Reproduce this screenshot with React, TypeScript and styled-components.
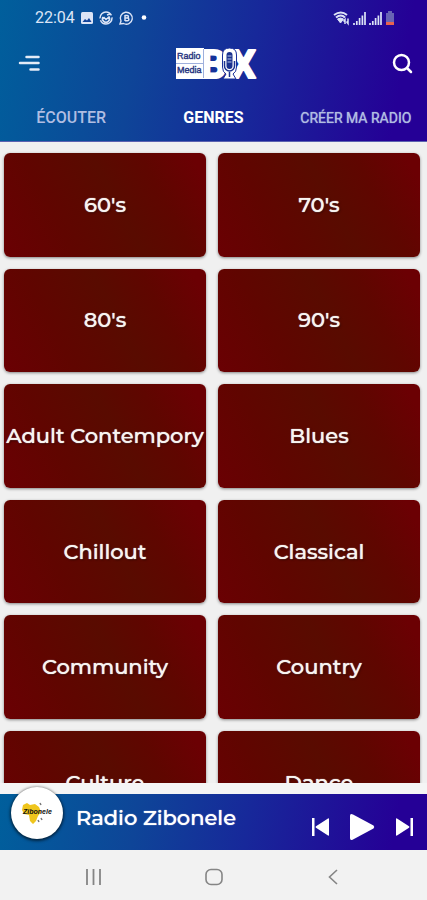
import React, { useState } from "react";
import styled, { createGlobalStyle } from "styled-components";

const GlobalStyle = createGlobalStyle`
  * { box-sizing: border-box; }
  body { margin: 0; background: #f0f0f0; font-family: Roboto, sans-serif; }
  button { border: 0; padding: 0; margin: 0; background: none; color: inherit; font: inherit; cursor: pointer; }
  svg { display: block; overflow: visible; }
`;

const brandGradient = "linear-gradient(100deg, #005f9c 0%, #0e4598 32%, #17289a 58%, #250096 92%)";

const Screen = styled.div`
  display: flex;
  flex-direction: column;
  height: 100vh;
  overflow: hidden;
`;

const Header = styled.header`
  flex: none;
  background: ${brandGradient};
  color: #fff;
  border-bottom: 1px solid #5c62b0;
`;

const StatusBar = styled.div`
  display: flex;
  align-items: center;
  justify-content: space-between;
  height: 36px;
  padding: 0 32px 0 35px;
  color: #dce4f6;
`;

const StatusGroup = styled.div<{ $gap: number }>`
  display: flex;
  align-items: center;
  gap: ${(p) => p.$gap}px;
`;

const Clock = styled.time`
  font-size: 16px;
  line-height: 20px;
`;

const Toolbar = styled.div`
  display: grid;
  grid-template-columns: 1fr auto 1fr;
  align-items: center;
  height: 56px;
  padding: 0 12px 0 16px;
`;

const IconButton = styled.button<{ $end?: boolean }>`
  display: flex;
  justify-self: ${(p) => (p.$end ? "end" : "start")};
`;

const Tabs = styled.nav`
  display: grid;
  grid-template-columns: repeat(3, 1fr);
  height: 49px;
`;

const Tab = styled.button<{ $active: boolean; $small?: boolean }>`
  color: ${(p) => (p.$active ? "#fff" : "#b0bde2")};
  font-size: ${(p) => (p.$small ? 14 : 16)}px;
  font-weight: ${(p) => (p.$active ? 700 : p.$small ? 400 : 500)};
  text-shadow: ${(p) => (p.$small ? "0 0 1px #b0bde2" : "none")};
  white-space: nowrap;
  padding-top: 2px;
`;

const Genres = styled.main`
  flex: 1;
  min-height: 0;
  overflow: hidden;
  display: grid;
  grid-template-columns: 1fr 1fr;
  align-content: start;
  gap: 12px;
  padding: 11px 7px 0 4px;
`;

const GenreCard = styled.button`
  aspect-ratio: 39 / 20;
  min-width: 0;
  border-radius: 6px;
  background: linear-gradient(62deg, #6a0003 0%, #600500 28%, #590b00 55%, #5f0600 74%, #6b0003 94%);
  box-shadow: 0 1px 3px rgba(0, 0, 0, 0.45);
  color: #f8f4f1;
  font-family: Montserrat, Inter, sans-serif;
  font-size: 21px;
  font-weight: 500;
  line-height: 28px;
  white-space: nowrap;
  text-shadow: 0 0 1px #f8f4f1, 1px 1px 2px rgba(0, 0, 0, 0.5);
`;

const PlayerArea = styled.footer`
  flex: none;
  padding-top: 11px;
  background: #f5f5f5;
`;

const Player = styled.div`
  display: flex;
  align-items: center;
  height: 56px;
  padding: 0 14px 0 11px;
  background: ${brandGradient};
  color: #fff;
`;

const Avatar = styled.div`
  flex: none;
  align-self: flex-start;
  width: 52px;
  height: 52px;
  margin-top: -7px;
  border-radius: 50%;
  background: #fff;
  box-shadow: 0 1px 3px 1px rgba(0, 0, 0, 0.6);
`;

const Station = styled.div`
  flex: 1;
  min-width: 0;
  padding: 0 0 9px 13px;
  font-family: Montserrat, Inter, sans-serif;
  font-size: 21px;
  font-weight: 500;
  line-height: 28px;
  white-space: nowrap;
  text-shadow: 0 0 1px #fff;
`;

const Controls = styled.div`
  display: flex;
  align-items: center;
  gap: 20px;
  padding-top: 9px;
`;

const SystemNav = styled.nav`
  flex: none;
  display: flex;
  align-items: center;
  justify-content: center;
  gap: 24vw;
  height: 50px;
  padding-top: 3px;
  background: #f2f2f2;
  color: #858585;
`;

const Logo = () => (
  <svg width="82" height="34" viewBox="0 0 82 34" role="img" aria-label="Radio Media Box">
    <g fontFamily="Roboto, sans-serif" fontWeight="700" fontSize="39" fill="#fff" stroke="#fff" strokeWidth="2" strokeLinejoin="round">
      <text x="26" y="31">B</text>
      <text x="56" y="31">X</text>
    </g>
    <rect x="1" y="1" width="28" height="31" fill="#fff" />
    <path d="M1 16.500H28M28.500 2V31" stroke="#9fb0dc" strokeWidth="1" />
    <g fontFamily="Liberation Sans, sans-serif" fontSize="9" fill="#27357f" stroke="#27357f" strokeWidth=".4">
      <text x="2" y="12">Radio</text>
      <text x="2" y="26">Media</text>
    </g>
    <path d="M47.500 8q0-7 7-7t7 7v12q0 5-3.500 7l3 5H48l3-5q-3.500-2-3.500-7z" fill="#fff" stroke="#19309a" strokeWidth="1" />
    <path d="M49.500 14v5a5 5 0 0 0 10 0v-5M54.500 25v5" fill="none" stroke="#1b328f" strokeWidth="1.500" />
    <rect x="51.500" y="5" width="6" height="17" rx="3" fill="#1b328f" />
    <path d="M52.500 9h4M52.500 12h4M52.500 15h4" stroke="#b9c5e8" strokeWidth="1" />
  </svg>
);

const Signal = () => (
  <svg width="13" height="13" viewBox="0 0 13 13" stroke="currentColor" strokeWidth="1.700">
    <path d="M1 13v-2M3.800 13V9M6.600 13V6M9.400 13V3.500M12 13V0" />
  </svg>
);

const ZiboneleLogo = () => (
  <svg width="52" height="52" viewBox="0 0 52 52" role="img" aria-label="Zibonele">
    <path d="M12 18l4-2 3 2 5-1 4 3 2 5-3 4-2 5-3 3-3-3-1-6-5-1-2-4z" fill="#efc51d" />
    <path d="M29 16l1 2M30 31l1 2M27 33l1 2" stroke="#777" strokeWidth="1.500" />
    <text x="12" y="27" fontFamily="Liberation Sans, sans-serif" fontSize="7" fontWeight="700" fontStyle="italic" fill="#111">Zibonele</text>
  </svg>
);

const genres = [
  "60's", "70's", "80's", "90's", "Adult Contempory", "Blues",
  "Chillout", "Classical", "Community", "Country", "Culture", "Dance",
];
const tabs = ["ÉCOUTER", "GENRES", "CRÉER MA RADIO"];

export default function App() {
  const [active, setActive] = useState("GENRES");
  return (
    <Screen>
      <GlobalStyle />
      <Header>
        <StatusBar>
          <StatusGroup $gap={6}>
            <Clock>22:04</Clock>
            <svg width="12" height="12" viewBox="0 0 12 12">
              <rect width="12" height="12" rx="1.500" fill="currentColor" />
              <path d="M1.500 10l2.500-3 2 1.500L8 6l2.500 4z" fill="#13449a" />
            </svg>
            <svg width="14" height="14" viewBox="0 0 14 14" fill="none" stroke="currentColor">
              <circle cx="7" cy="7" r="6" strokeWidth="1.500" strokeDasharray="16 2" />
              <path d="M4 6a3.500 3.500 0 1 0 6 0L7 8.500 4.500 6M8 4l3-1" strokeWidth="1.600" />
            </svg>
            <svg width="15" height="14" viewBox="0 0 15 14" fill="none" stroke="currentColor">
              <path d="M1 13l1-3a6 6 0 1 1 2.500 2.500z" strokeWidth="1.400" />
              <path d="M6 4v6M6 4.500h2.200a1.200 1.200 0 0 1 0 2.500H6h2.500a1.400 1.400 0 0 1 0 2.800H6" strokeWidth="1.500" />
            </svg>
            <svg width="8" height="6" viewBox="0 0 8 6"><circle cx="4" cy="2.500" r="2.300" fill="#fff" /></svg>
          </StatusGroup>
          <StatusGroup $gap={3}>
            <svg width="17" height="14" viewBox="0 0 17 14" fill="none" stroke="currentColor">
              <path d="M1 4q7-5 13 0M3 6.500q5-4 9 0" strokeWidth="2" />
              <path d="M4.500 8q3-2 6 0l-3 4z" fill="currentColor" />
              <path d="M12 13V8.500l-1.500 2M15 7.500v5l-1.500-2" strokeWidth="1.500" />
            </svg>
            <Signal />
            <Signal />
            <svg width="10" height="14" viewBox="0 0 10 14">
              <path d="M3 0h4v2h2v12H1V2h2z" fill="#6864b4" />
              <path d="M1 11h8v3H1z" fill="#e8624f" />
            </svg>
          </StatusGroup>
        </StatusBar>
        <Toolbar>
          <IconButton aria-label="Menu">
            <svg width="28" height="24" viewBox="0 0 28 24" stroke="#e4ebf7" strokeWidth="2.500" strokeLinecap="round">
              <path d="M10.500 5h12M4 11h18.500M14.500 17.500h8" />
            </svg>
          </IconButton>
          <Logo />
          <IconButton $end aria-label="Rechercher">
            <svg width="24" height="24" viewBox="0 0 24 24" fill="none" stroke="#fff" strokeWidth="2.500" strokeLinecap="round">
              <circle cx="10.500" cy="10.500" r="7.500" />
              <path d="M16.500 16.500l3.500 3.500" />
            </svg>
          </IconButton>
        </Toolbar>
        <Tabs>
          {tabs.map((t) => (
            <Tab key={t} $active={active === t} $small={t.length > 10} onClick={() => setActive(t)}>{t}</Tab>
          ))}
        </Tabs>
      </Header>
      <Genres>
        {genres.map((g) => <GenreCard key={g}>{g}</GenreCard>)}
      </Genres>
      <PlayerArea>
        <Player>
          <Avatar><ZiboneleLogo /></Avatar>
          <Station>Radio Zibonele</Station>
          <Controls>
            <IconButton aria-label="Précédent">
              <svg width="18" height="18" viewBox="0 0 18 18" fill="#fff">
                <path d="M0 0h2.500v18H0zM17 1v16q0 1-1 .5L4 9.700q-1-.7 0-1.400L16 .5q1-.5 1 .5z" />
              </svg>
            </IconButton>
            <IconButton aria-label="Lecture">
              <svg width="25" height="26" viewBox="0 0 25 26" fill="#fff">
                <path d="M0 2q0-3 3-1.500l20.500 11q1.500 1.500 0 3L3 25.500Q0 27 0 24z" />
              </svg>
            </IconButton>
            <IconButton aria-label="Suivant">
              <svg width="18" height="18" viewBox="0 0 18 18" fill="#fff">
                <path d="M15.500 0H18v18h-2.500zM1 1v16q0 1 1 .5l12-7.800q1-.7 0-1.400L2 .5Q1 0 1 1z" />
              </svg>
            </IconButton>
          </Controls>
        </Player>
      </PlayerArea>
      <SystemNav>
        <IconButton aria-label="Applications récentes">
          <svg width="18" height="18" viewBox="0 0 18 18" stroke="currentColor" strokeWidth="1.800"><path d="M3 1v16M9.500 1v16M16 1v16" /></svg>
        </IconButton>
        <IconButton aria-label="Accueil">
          <svg width="18" height="18" viewBox="0 0 18 18" fill="none" stroke="currentColor" strokeWidth="1.600"><rect x="1" y="1.500" width="16" height="15" rx="5" /></svg>
        </IconButton>
        <IconButton aria-label="Retour">
          <svg width="18" height="18" viewBox="0 0 18 18" fill="none" stroke="currentColor" strokeWidth="1.600"><path d="M12 2L4.500 9l7.500 7" /></svg>
        </IconButton>
      </SystemNav>
    </Screen>
  );
}
